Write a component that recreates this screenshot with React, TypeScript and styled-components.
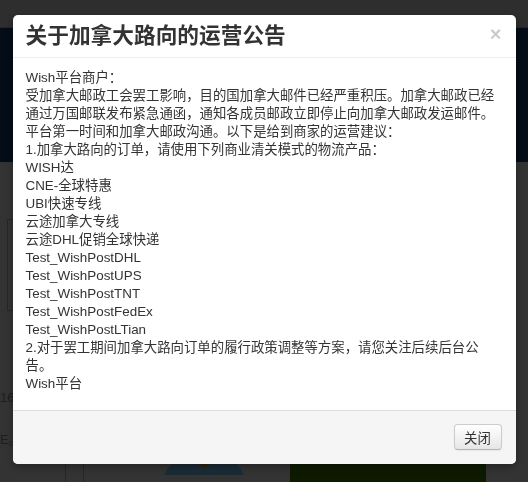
import styled, { createGlobalStyle } from 'styled-components';

const GlobalStyle = createGlobalStyle`
  html, body {
    margin: 0;
    padding: 0;
    background: #333333;
    font-family: "Liberation Sans", "Noto Sans CJK SC", sans-serif;
  }
  * {
    box-sizing: border-box;
  }
`;

const Page = styled.div`
  width: 528px;
  height: 482px;
  overflow: hidden;
  display: flex;
  flex-direction: column;
  background: #333333;
`;

const TopBar = styled.div`
  flex-shrink: 0;
  height: 28px;
  background: #2e2e2e;
  border-bottom: 1px solid #262626;
`;

const Hero = styled.div`
  flex-shrink: 0;
  height: 134px;
  background: #040c18;
`;

const Content = styled.div`
  flex: 1;
  min-height: 0;
  overflow: hidden;
  display: flex;
  flex-direction: column;
  padding: 57px 0 0 7px;
`;

const SideCard = styled.div`
  flex-shrink: 0;
  width: 200px;
  height: 92px;
  border: 1px solid #262626;
`;

const FadedText = styled.div`
  flex-shrink: 0;
  font-size: 13px;
  line-height: 16px;
  color: #1e1e1e;
  margin-top: ${(p: { top: number }) => p.top}px;
  margin-left: -7px;
`;

const BottomRow = styled.div`
  flex-shrink: 0;
  display: flex;
  align-items: flex-start;
  margin-top: 7px;
  margin-left: -7px;
  height: 40px;
`;

const VLine = styled.div`
  width: 1px;
  height: 40px;
  background: #262626;
  margin-left: ${(p: { left: number }) => p.left}px;
`;

const Person = styled.svg`
  margin-left: 80px;
`;

const GreenBox = styled.div`
  width: 196px;
  height: 30px;
  margin-left: 46px;
  margin-top: 6px;
  background: #0d1a00;
  border-radius: 5px;
`;

const Backdrop = styled.div`
  position: fixed;
  inset: 0;
  display: flex;
  justify-content: center;
  align-items: flex-start;
  padding-top: 15px;
`;

const Modal = styled.div`
  width: 503px;
  background: #ffffff;
  border-radius: 5px;
  box-shadow: 0 3px 7px rgba(0, 0, 0, 0.3);
  overflow: hidden;
  color: #333333;
`;

const Header = styled.div`
  height: 43px;
  display: flex;
  align-items: center;
  justify-content: space-between;
  padding: 0 14px 0 13px;
  border-bottom: 1px solid #eeeeee;
`;

const Title = styled.h3`
  margin: 0;
  font-size: 21.7px;
  font-weight: bold;
  line-height: 30px;
  color: #333333;
`;

const Close = styled.span`
  font-size: 20px;
  font-weight: bold;
  line-height: 20px;
  color: #000000;
  opacity: 0.2;
  margin-top: -4px;
`;

const Body = styled.div`
  height: 352px;
  padding: 11px 13px 0 13px;
  font-size: 13.4px;
  line-height: 18px;
`;

const Line = styled.div``;

const Footer = styled.div`
  height: 54px;
  display: flex;
  align-items: flex-start;
  justify-content: flex-end;
  padding: 13px 14px 0 0;
  background: #f5f5f5;
  border-top: 1px solid #dddddd;
`;

const Button = styled.button`
  width: 48px;
  height: 26px;
  padding: 0;
  font-family: "Liberation Sans", "Noto Sans CJK SC", sans-serif;
  font-size: 13.4px;
  color: #333333;
  background: linear-gradient(to bottom, #ffffff, #e6e6e6);
  border: 1px solid #cccccc;
  border-bottom-color: #b3b3b3;
  border-radius: 4px;
  box-shadow: inset 0 1px 0 rgba(255, 255, 255, 0.2), 0 1px 2px rgba(0, 0, 0, 0.05);
`;

const lines = [
  'Wish平台商户：',
  '受加拿大邮政工会罢工影响，目的国加拿大邮件已经严重积压。加拿大邮政已经通过万国邮联发布紧急通函，通知各成员邮政立即停止向加拿大邮政发运邮件。',
  '平台第一时间和加拿大邮政沟通。以下是给到商家的运营建议：',
  '1.加拿大路向的订单，请使用下列商业清关模式的物流产品：',
  'WISH达',
  'CNE-全球特惠',
  'UBI快速专线',
  '云途加拿大专线',
  '云途DHL促销全球快递',
  'Test_WishPostDHL',
  'Test_WishPostUPS',
  'Test_WishPostTNT',
  'Test_WishPostFedEx',
  'Test_WishPostLTian',
  '2.对于罢工期间加拿大路向订单的履行政策调整等方案，请您关注后续后台公告。',
  'Wish平台',
];

export default function App() {
  return (
    <Page>
      <GlobalStyle />
      <TopBar />
      <Hero />
      <Content>
        <SideCard />
        <FadedText top={79}>16,</FadedText>
        <FadedText top={26}>E。</FadedText>
        <BottomRow>
          <VLine left={65} />
          <VLine left={17} />
          <Person width="80" height="20" viewBox="0 0 80 20">
            <path d="M0 20 Q6 6 22 2 L40 14 L58 2 Q74 6 80 20 Z" fill="#1b2b36" />
            <path d="M22 2 L40 14 L58 2 L52 0 L28 0 Z" fill="#2a2418" />
          </Person>
          <GreenBox />
        </BottomRow>
      </Content>
      <Backdrop>
        <Modal>
          <Header>
            <Title>关于加拿大路向的运营公告</Title>
            <Close>×</Close>
          </Header>
          <Body>
            {lines.map((t, i) => (
              <Line key={i}>{t}</Line>
            ))}
          </Body>
          <Footer>
            <Button>关闭</Button>
          </Footer>
        </Modal>
      </Backdrop>
    </Page>
  );
}
